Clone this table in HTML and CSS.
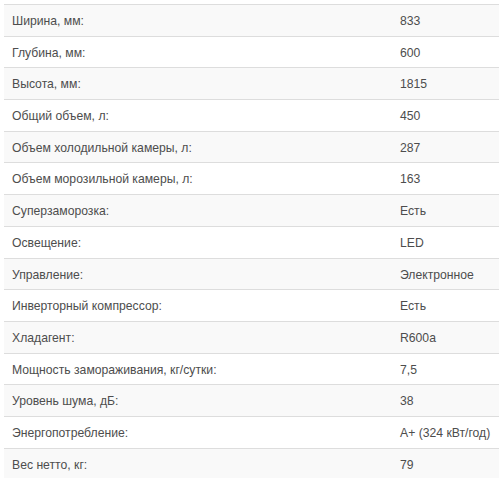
FILE: index.html
```html
<!DOCTYPE html>
<html lang="ru">
<head>
<meta charset="utf-8">
<title>Характеристики</title>
<link rel="stylesheet" href="styles.css">
</head>
<body>
<table class="specs">
<tbody>
<tr><td class="name">Ширина, мм:</td><td class="val">833</td></tr>
<tr><td class="name">Глубина, мм:</td><td class="val">600</td></tr>
<tr><td class="name">Высота, мм:</td><td class="val">1815</td></tr>
<tr><td class="name">Общий объем, л:</td><td class="val">450</td></tr>
<tr><td class="name">Объем холодильной камеры, л:</td><td class="val">287</td></tr>
<tr><td class="name">Объем морозильной камеры, л:</td><td class="val">163</td></tr>
<tr><td class="name">Суперзаморозка:</td><td class="val">Есть</td></tr>
<tr><td class="name">Освещение:</td><td class="val">LED</td></tr>
<tr><td class="name">Управление:</td><td class="val">Электронное</td></tr>
<tr><td class="name">Инверторный компрессор:</td><td class="val">Есть</td></tr>
<tr><td class="name">Хладагент:</td><td class="val">R600a</td></tr>
<tr><td class="name">Мощность замораживания, кг/сутки:</td><td class="val">7,5</td></tr>
<tr><td class="name">Уровень шума, дБ:</td><td class="val">38</td></tr>
<tr><td class="name">Энергопотребление:</td><td class="val">A+ (324 кВт/год)</td></tr>
<tr><td class="name">Вес нетто, кг:</td><td class="val">79</td></tr>
</tbody>
</table>
</body>
</html>
```

FILE: styles.css
```css
html, body {
  margin: 0;
  padding: 0;
  background: #fff;
}
body {
  padding: 4px 0 0 4px;
  font-family: "Liberation Sans", Arial, Helvetica, sans-serif;
  font-size: 12.2px;
  line-height: 18.6px;
  color: #4d4d4d;
  overflow: hidden;
}
.specs {
  border-collapse: collapse;
  border-spacing: 0;
  width: 495px;
  table-layout: fixed;
}
.specs td {
  padding: 7px 8px 5.1px;
  border-top: 1px solid #ddd;
  vertical-align: top;
  text-align: left;
  white-space: nowrap;
  overflow: hidden;
}
.specs tr:nth-child(odd) td {
  background: #f9f9f9;
}
.specs .name {
  width: 372px;
}
```
